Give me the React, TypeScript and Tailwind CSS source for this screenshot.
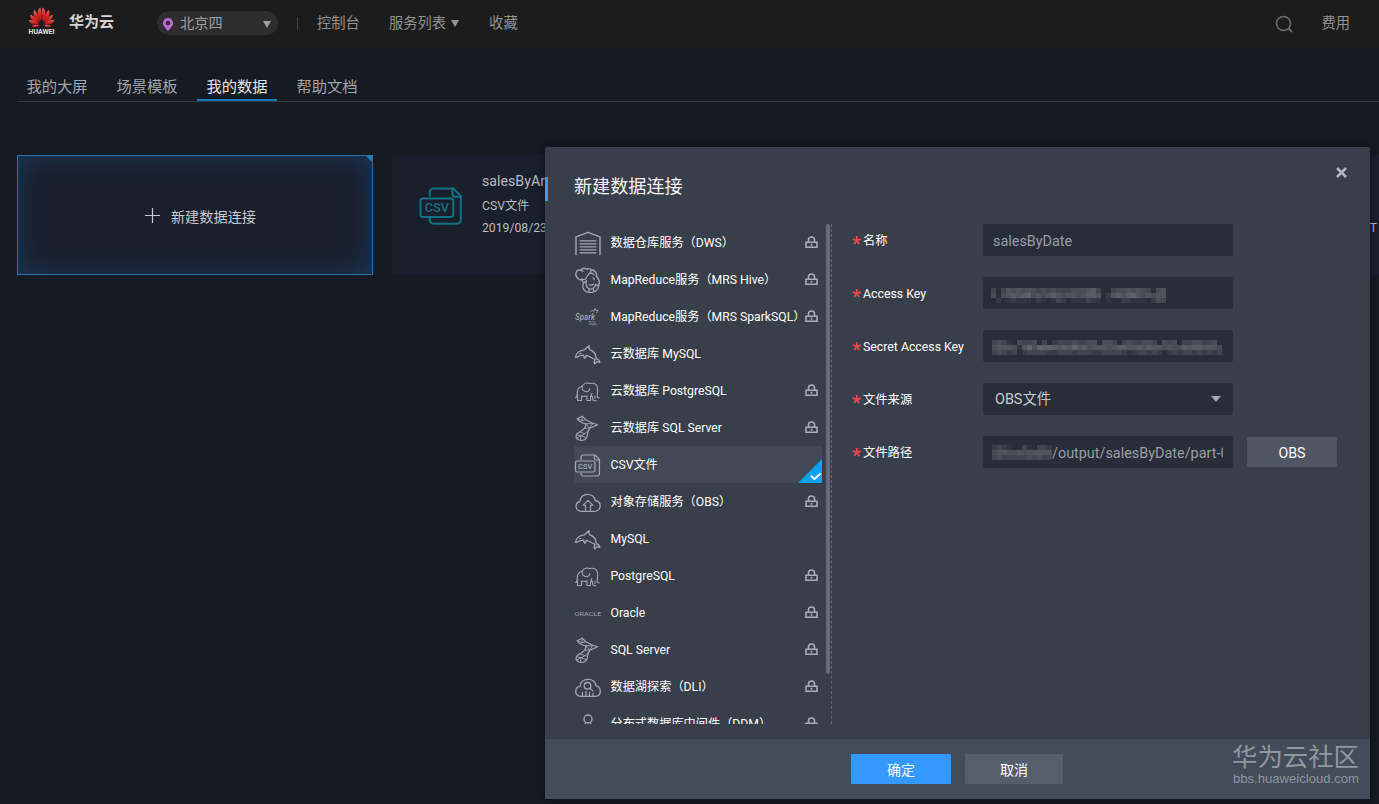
import type { ReactNode } from "react";
import clsx from "clsx";

type IconName =
  | "dws"
  | "hive"
  | "spark"
  | "mysql"
  | "postgres"
  | "sqlserver"
  | "csv"
  | "obs"
  | "oracle"
  | "dli"
  | "ddm";

interface Source {
  label: string;
  icon: IconName;
  locked?: boolean;
  selected?: boolean;
}

const sources: Source[] = [
  { label: "数据仓库服务（DWS）", icon: "dws", locked: true },
  { label: "MapReduce服务（MRS Hive）", icon: "hive", locked: true },
  { label: "MapReduce服务（MRS SparkSQL）", icon: "spark", locked: true },
  { label: "云数据库 MySQL", icon: "mysql" },
  { label: "云数据库 PostgreSQL", icon: "postgres", locked: true },
  { label: "云数据库 SQL Server", icon: "sqlserver", locked: true },
  { label: "CSV文件", icon: "csv", selected: true },
  { label: "对象存储服务（OBS）", icon: "obs", locked: true },
  { label: "MySQL", icon: "mysql" },
  { label: "PostgreSQL", icon: "postgres", locked: true },
  { label: "Oracle", icon: "oracle", locked: true },
  { label: "SQL Server", icon: "sqlserver", locked: true },
  { label: "数据湖探索（DLI）", icon: "dli", locked: true },
  { label: "分布式数据库中间件（DDM）", icon: "ddm", locked: true },
];

const tabs = ["我的大屏", "场景模板", "我的数据", "帮助文档"];

const iconShapes: Record<IconName, ReactNode> = {
  dws: (
    <g transform="translate(0 .8)">
      <path d="M2 26V8L14 3.500l12 4.500V26" strokeWidth="1.4" />
      <path d="M6 12h16M6 15h16M6 18h16M6 21h16M6 24h16" strokeWidth="1.3" />
    </g>
  ),
  hive: (
    <g transform="translate(0 .8)">
      <path d="M4 12.500C2 11 1 8 2.500 6c.5-2 2.500-2 4-1.500C8.500 2 11 2 13 3.500c1.500-1 3.500-.5 4.500.7C20 4 21.500 5.500 22 7.500c1 1 .8 2 .5 3 2 2.500 3.500 6 2.500 8.500-1 1.500-2.500 1-3.500-.5" strokeWidth="1.400" />
      <path d="M4 12.500c1 2 3 1.800 4 .5 1.500 1.300 3 .8 4-.5M8 13c-.3 2 .7 3.500 2 3.500s1.500-1 2.500-1.500M15 8c-1.500 1.500-2.500 3-3 5M15 8c2-1 4-.5 5 1M17.500 4.200c-.5 1.500-1.500 2.800-2.500 3.800M6.500 4.500c1 0 2 .5 2.500 1.500M19 12c.8.300 1.200 1 1.300 1.800" />
      <path d="M10 16.500c-2 3-1.500 7 1.500 9 3.500 2 8 1.500 10.500-.5 2-1.500 3-4 2-6M12.500 15c-1 4 0 7 3 8 3 .8 5.500-.5 6-4.500M15 19c1.500.7 3 .5 4.500-.5M15 23v3M19 22.500l1 3" />
    </g>
  ),
  spark: (
    <g transform="translate(0 .5)">
      <text x="1" y="17.500" fontSize="8.500" fontStyle="italic" fontWeight="500" className="fill-[#a3a7b0]" stroke="none" textLength="20" lengthAdjust="spacingAndGlyphs">
        Spark
      </text>
      <path d="M16.500 9c1-2 2.500-1 3 0l1.500-3 1 2 2-.5-1.500 3" strokeWidth="0.9" />
      <text x="14.500" y="22.500" fontSize="4.500" className="fill-[#a3a7b0]" stroke="none">
        SQL
      </text>
    </g>
  ),
  mysql: (
    <g transform="translate(-.5 1)">
      <path
        transform="translate(0 .8) scale(1 .9)"
        d="M2 18.500c.5-4.500 4-8 9-8.500l4.500-4.500c-.5 2 0 3.500 1 4.500 4 1.500 6 5.500 6.500 10 2 .5 3 2 3.300 4-1.300-.5-2.300-.7-3.300-.3-.5.700-1 1.300-2 2-.5-2 0-4 .5-5-3-1.500-5.500-3.500-8.500-4.500l-1.500 3.300c-1-1-1.500-2.300-1.300-3.500-2.500.1-4 .5-5.200 1.500-.8.7-2 1-3 1z"
        strokeWidth="1.400"
      />
      <path d="M6 13.500h1.500" />
    </g>
  ),
  postgres: (
    <g transform="translate(-1 0)">
      <path d="M2.500 21.500c1.500 0 1.700-1 1.700-3-.3-4.500 1.300-7.500 5-8.500 1.500-3 5-3.700 7.500-2.500 4-.7 7 .5 7.700 4 .8 3.500-.3 5.500-.2 8.500.1 1.500.8 2 2 1.800" strokeWidth="1.1" />
      <path d="M4.500 18v6.500h4V20c2 .5 4 .5 5.500 0v4.500h3.500V20l2 .5v2c0 2 1.700 2.500 3.500 2" strokeWidth="1.100" />
      <path d="M9.500 10c-1 2.500 0 4.500 1.800 5 2.500 1.500 5 .5 5.500-2.500M19 17.500c-1 .7-1 1.800.2 3M22 20v2.500" strokeWidth="1.100" />
    </g>
  ),
  sqlserver: (
    <g transform="translate(-.8 1.200)">
      <path d="M4 4.500l5-2.500 3.500 3.500 7 3.500 5 1.500-8 3.500c-1.500 3-2.500 5-2.500 8-1 3.500-4 4.800-8 3.800-3.500-1-4-4-2-6.300 3-2.500 6-3.200 7.500-5.500l1.500-4-4-1.500-3.500-2z" />
      <path d="M9 2v4.500l3.500-1M12.500 9.500h7M13 10l3.500 4M19.500 9l-3 5M11.500 14l5 0M7 18l5 1.500 3-3.500M3 20.500l5 1 4-2M8 21.500l-1 4.500M3 24l5-2.500 5 2M4 4.500l5 2" strokeWidth="0.9" />
    </g>
  ),
  csv: (
    <g transform="translate(0 1.500)">
      <path d="M7 8V6c0-1.500 1-2.500 2.500-2.500H21l4.500 4.500v14c0 1.500-1 2.500-2.500 2.500H9.500C8 24.500 7 23.500 7 22v-.5" />
      <path d="M20.500 3.500V7c0 1 .5 1.500 1.500 1.500h3.500" />
      <rect x="1.500" y="9.500" width="19.500" height="11" rx="1.500" />
      <text x="4" y="17.800" fontSize="7.500" fontWeight="500" className="fill-current" stroke="none" textLength="14.500" lengthAdjust="spacingAndGlyphs">
        CSV
      </text>
    </g>
  ),
  obs: (
    <g transform="translate(0 1.300)">
      <path d="M8 23c-3.500 0-6-2-6-5 0-2.500 1.700-4.300 4-5 .5-4.500 3.500-7 7.500-7s7 2.300 7.700 6.200c3 .5 5 2.700 5 5.300 0 3.300-2.500 5.500-5.700 5.500z" strokeWidth="1.300" />
      <path d="M11.500 22v-5H9l5-5 5 5h-2.500v5" strokeWidth="1.100" />
    </g>
  ),
  oracle: (
    <text x="0.500" y="18" fontSize="5.500" className="fill-[#a3a7b0]" stroke="none" textLength="27" lengthAdjust="spacingAndGlyphs">
      ORACLE
    </text>
  ),
  dli: (
    <g transform="translate(0 1.300)">
      <path d="M6.500 23c-3 0-4.800-2-4.800-5 0-2.700 1.500-4.500 4.300-5 .5-4.700 3.500-7 8-7s7.300 2.300 8 6.500c2.700.5 4.300 2.500 4.300 5.300 0 3-1.800 5.200-4.800 5.200z" strokeWidth="1.300" />
      <circle cx="13.500" cy="12.500" r="3.300" strokeWidth="1.300" />
      <path d="M15.800 15l3 2.500M8.500 23v-4M12 23v-5M15.500 23v-4M19 23v-3" strokeWidth="1.200" />
    </g>
  ),
  ddm: (
    <>
      <circle cx="14" cy="10" r="4" strokeWidth="1.400" />
      <path d="M12 13.500l-2 3M16 13.500l2 3" strokeWidth="1.300" />
      <circle cx="9.500" cy="19.500" r="2.800" />
      <circle cx="18.500" cy="19.500" r="2.800" />
    </>
  ),
};

const SourceIcon = ({ name, className }: { name: IconName; className?: string }) => (
  <svg
    viewBox="0 0 28 28"
    className={clsx("shrink-0", className)}
    fill="none"
    stroke="currentColor"
    strokeWidth="1.2"
    strokeLinecap="round"
    strokeLinejoin="round"
  >
    {iconShapes[name]}
  </svg>
);

const Lock = () => (
  <svg width="13" height="13" viewBox="0 0 13 13" className="shrink-0" fill="none" stroke="#a9adb7" strokeWidth="1.6">
    <path d="M3.500 6V3.800C3.500 2 4.700 1 6.500 1s3 1 3 2.800V6" />
    <path d="M1 6.300h11v5H1zM6.500 7.800v2" />
  </svg>
);

const petals = [
  "M13 15C9 11 8.500 4 12.300 1.500c1.300 4 1.400 9 .7 13.500z",
  "M12 16C7 13 4 8 6.200 4c3 2.500 5.300 7.500 5.800 12z",
  "M11.500 17C6 16 1.500 12.500 2.200 8.500c3.800 1.500 7.300 4.500 9.300 8.500z",
  "M11 18.200C6.500 19.500 1.500 18 .800 14c4-.2 7.700 1.200 10.200 4.200z",
  "M11 19.300c-2 2.200-5.500 2.700-7.500.5 2-.8 5-.9 7.500-.5z",
];

const HuaweiLogo = () => (
  <svg width="30" height="30" viewBox="0 0 30 30">
    <defs>
      <linearGradient id="petal" x1="0" y1="0" x2="0" y2="1">
        <stop offset="0" stopColor="#e0705f" />
        <stop offset="0.500" stopColor="#cf2a24" />
        <stop offset="1" stopColor="#b01014" />
      </linearGradient>
    </defs>
    <g fill="url(#petal)" transform="translate(1 0)">
      {petals.map((d) => (
        <path key={d} d={d} />
      ))}
      <g transform="translate(27 0) scale(-1 1)">
        {petals.map((d) => (
          <path key={d} d={d} />
        ))}
      </g>
    </g>
    <text x="1.500" y="28" fontSize="6.500" fontWeight="700" fill="#e2e2e2" textLength="26" lengthAdjust="spacingAndGlyphs">
      HUAWEI
    </text>
  </svg>
);

const Caret = ({ className }: { className?: string }) => (
  <svg width="8" height="7" viewBox="0 0 8 7" className={className} fill="currentColor">
    <path d="M0 0h8L4 7z" />
  </svg>
);

// Pixelated strip that hides a secret value, one string of levels per row
const Mosaic = ({ rows }: { rows: string[] }) => (
  <svg width={rows[0].length * 5} height={rows.length * 5} className="shrink-0" shapeRendering="crispEdges">
    {rows.map((row, y) =>
      row.split("").map((level, x) => (
        <rect key={`${x}-${y}`} x={x * 5} y={y * 5} width="5" height="5" fill="#9a9ca0" opacity={Number(level) / 14} />
      ))
    )}
  </svg>
);

const accessKeyRows = [
  "30354545434343334445630034454543045",
  "40456567454565455456650256567545455",
  "02012111021013201113210100221110243",
];

const secretKeyRows = [
  "3431043340302333433440443034334430434033443340",
  "4555415747676565756455545665565655454465665554",
  "3432302333322333233322333321233232023233232323",
];

const Header = () => (
  <header className="h-[47px] bg-[#1c1c1c] flex items-center text-[14.3px] text-[#929292]">
    <div className="ml-[27px] mt-[-5px]">
      <HuaweiLogo />
    </div>
    <span className="ml-3 mt-[-2px] text-[15px] font-bold text-[#d5d5d5]">华为云</span>
    <div className="ml-[43px] w-[121px] h-6 mt-[-1px] rounded-full bg-[#2d2d2d] flex items-center text-[#a0a0a0] text-[14.2px]">
      <svg width="10" height="13" viewBox="0 0 10 13" className="ml-[6px] mt-[3px]">
        <path fillRule="evenodd" fill="#c067dc" d="M5 0a5 5 0 0 1 5 5c0 3.200-3 5.500-5 8-2-2.500-5-4.800-5-8a5 5 0 0 1 5-5zm0 2.800a2.300 2.300 0 1 0 0 4.600 2.300 2.300 0 0 0 0-4.600z" />
      </svg>
      <span className="ml-[7px] mt-0.5">北京四</span>
      <Caret className="ml-auto mr-[7px] mt-0.5 text-[#a0a0a0]" />
    </div>
    <div className="ml-[19px] w-px h-[13px] bg-[#454545] mt-[-1px]" />
    <span className="ml-[19px]">控制台</span>
    <span className="ml-[29px]">服务列表</span>
    <Caret className="ml-[5px]" />
    <span className="ml-[30px]">收藏</span>
    <svg width="18" height="18" viewBox="0 0 18 18" className="ml-auto" fill="none" stroke="#6c6c6c" strokeWidth="1.600">
      <circle cx="8.500" cy="8.500" r="7" />
      <path d="M13.500 13.500l3.500 3.500" strokeWidth="2" />
    </svg>
    <span className="ml-[28px] mr-[29px] mt-px">费用</span>
  </header>
);

const Field = ({ label, children }: { label: string; children: ReactNode }) => (
  <div className="flex items-center h-8">
    <div className="w-[131px] flex items-center text-[12.3px] text-white">
      <span className="w-[11px] h-[17px] text-[20px] leading-[24px] font-medium text-[#f0484f]">*</span>
      <span className="pt-0.5">{label}</span>
    </div>
    {children}
  </div>
);

const inputStyle = "w-[250px] h-8 rounded-[2px] bg-[#282d39] flex items-center text-[14.4px] overflow-hidden";

const Modal = () => (
  <div className="absolute left-[545px] top-[147px] w-[825px] h-[652px] bg-[#383e4a] rounded-t-[2px] shadow-[0_0_8px_rgba(0,0,0,0.5)] flex flex-col">
    <div className="h-[77px] flex">
      <div className="w-[3px] h-6 mt-[30px] bg-[#3a99ff]" />
      <h2 className="ml-[26px] mt-[26px] text-[18.1px] leading-7 text-[#f4f5f7]">新建数据连接</h2>
      <svg width="11" height="11" viewBox="0 0 11 11" className="ml-auto mr-[23px] mt-[20px]" stroke="#b4b9c4" strokeWidth="2.500">
        <path d="M1 1l9 9M10 1l-9 9" />
      </svg>
    </div>
    <div className="h-[500px] flex overflow-hidden">
      <ul className="ml-[29px] w-[248px]">
        {sources.map(({ label, icon, locked, selected }) => (
          <li
            key={label}
            className={clsx("relative h-[37px] flex items-center text-[12.2px] text-white", selected && "bg-[#424856]")}
          >
            <SourceIcon name={icon} className="w-7 h-7 -mt-px text-[#a3a7b0]" />
            <span className="ml-[8.500px] pt-0.5 whitespace-nowrap">{label}</span>
            {locked && (
              <div className="absolute right-1 top-3">
                <Lock />
              </div>
            )}
            {selected && (
              <svg width="24" height="24" viewBox="0 0 24 24" className="absolute right-0 bottom-0">
                <path d="M24 0v24H0z" fill="#0da2f2" />
                <path d="M13 17l3.500 3 6-5.500" fill="none" stroke="#fff" strokeWidth="2" />
              </svg>
            )}
          </li>
        ))}
      </ul>
      <div className="ml-1 w-1 h-[450px] rounded-sm bg-[#656b7a]" />
      <div className="ml-px border-l border-dashed border-[#606674]" />
      <div className="ml-5 flex flex-col gap-[21px]">
        <Field label="名称">
          <div className={clsx(inputStyle, "pl-[10px] pt-[3px] text-[#9b9ea5]")}>salesByDate</div>
        </Field>
        <Field label="Access Key">
          <div className={clsx(inputStyle, "pl-[8px] pt-1")}>
            <Mosaic rows={accessKeyRows} />
          </div>
        </Field>
        <Field label="Secret Access Key">
          <div className={clsx(inputStyle, "pl-[9px] pt-0.5")}>
            <Mosaic rows={secretKeyRows} />
          </div>
        </Field>
        <Field label="文件来源">
          <div className={clsx(inputStyle, "pl-3 pr-3 justify-between text-[#c9ccd2]")}>
            <span className="pt-0.5">OBS文件</span>
            <svg width="10" height="6" viewBox="0 0 10 6" fill="#a3a7b0">
              <path d="M0 0h10L5 6z" />
            </svg>
          </div>
        </Field>
        <Field label="文件路径">
          <div className={clsx(inputStyle, "px-[9px]")}>
            <Mosaic rows={["232100310332", "455445455555", "343333343433"]} />
            <span className="w-[171px] pt-1 overflow-hidden whitespace-nowrap text-[#9b9ea5]">
              /output/salesByDate/part-0
            </span>
          </div>
          <button type="button" className="ml-[14px] w-[90px] h-[30px] rounded-[2px] bg-[#505562] pt-[3px] text-[14.2px] text-white">
            OBS
          </button>
        </Field>
      </div>
    </div>
    <div className="mt-auto h-[60px] bg-[#444b59] flex items-center text-[14px] text-white">
      <button type="button" className="ml-[306px] w-[100px] h-[30px] rounded-[1px] bg-[#3399ff] pt-0.5">
        确定
      </button>
      <button type="button" className="ml-[14px] w-[98px] h-[30px] rounded-[1px] bg-[#575e6b] pt-0.5">
        取消
      </button>
      <div className="ml-auto mr-[10px] mt-[-10px] w-[128px] text-[#9297a1]">
        <div className="text-[25.4px] leading-[30px] whitespace-nowrap">华为云社区</div>
        <div className="ml-px text-[13.1px] leading-[14px] whitespace-nowrap font-['Liberation_Sans']">bbs.huaweicloud.com</div>
      </div>
    </div>
  </div>
);

const App = () => {
  return (
    <div className="relative w-full h-[804px] overflow-hidden bg-[#151a23] font-[Roboto,'Noto_Sans_CJK_SC',sans-serif]">
      <Header />
      <nav className="ml-[17px] mt-[25px] h-[30px] border-b border-[#343a45] flex gap-[10px] text-[15.3px] text-[#a2a5aa]">
        {tabs.map((tab) => (
          <div
            key={tab}
            className={clsx(
              "w-20 h-[29px] text-center leading-[31px] whitespace-nowrap",
              tab === "我的数据" && "text-[#e4e6ea] border-b-2 border-[#1a7ab8]"
            )}
          >
            {tab}
          </div>
        ))}
      </nav>
      <div className="ml-[17px] mt-[53px] flex gap-[19px]">
        <div className="relative w-[356px] h-[120px] shrink-0 border border-[#2f70a8] bg-[#1a1f2c] shadow-[inset_0_0_30px_#1b385c] flex items-center justify-center gap-[11px] pt-[5px] pl-[11px] text-[14.2px] text-[#c8cacf]">
          <svg width="15" height="15" viewBox="0 0 15 15" className="mt-[-4px]" stroke="#c8cacf" strokeWidth="1.200">
            <path d="M7.500 0v15M0 7.500h15" />
          </svg>
          新建数据连接
          <svg width="6" height="6" viewBox="0 0 6 6" className="absolute right-0 top-0">
            <path d="M0 0h6v6z" fill="#0b86bd" />
          </svg>
        </div>
        <div className="w-[356px] h-[120px] shrink-0 bg-[#1a1f2c] flex">
          <SourceIcon name="csv" className="ml-[26px] mt-[25px] w-[47px] h-[47px] text-[#107383]" />
          <div className="ml-[17px] mt-4 text-[#b9bbc0]">
            <div className="text-[14.2px] leading-5">salesByArea</div>
            <div className="mt-[5px] text-[12.2px] leading-5">CSV文件</div>
            <div className="mt-0.5 text-[12.2px] leading-5 whitespace-nowrap">2019/08/23</div>
          </div>
        </div>
        <div className="w-[356px] h-[120px] shrink-0 bg-[#1a1f2c]" />
        <div className="w-[237px] h-[120px] shrink-0 bg-[#1a1f2c] flex justify-end">
          <span className="mt-[65px] mr-[2px] text-[12px] leading-4 text-[#b9bbc0]">T</span>
        </div>
      </div>
      <Modal />
    </div>
  );
};

export default App;
